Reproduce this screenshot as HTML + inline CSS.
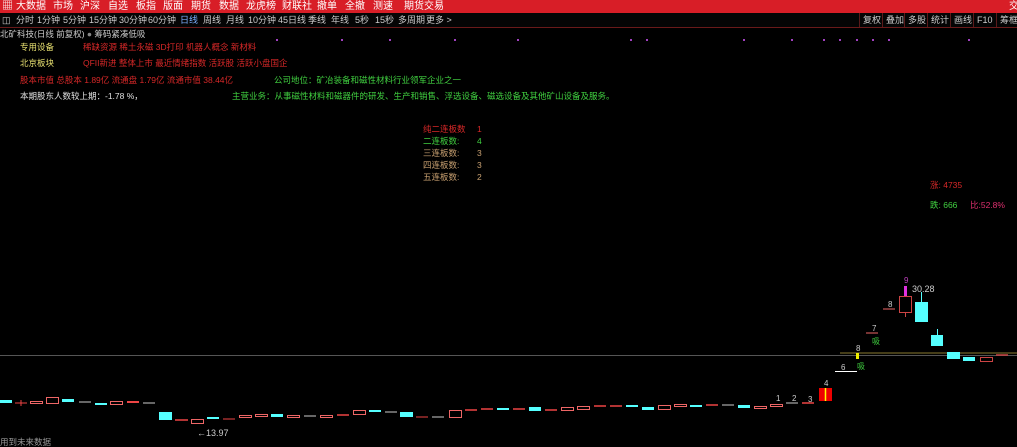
<!DOCTYPE html>
<html><head><meta charset="utf-8"><style>
*{margin:0;padding:0;box-sizing:border-box}
body{width:1017px;height:447px;background:#000;overflow:hidden;position:relative;font-family:"Liberation Sans","Noto Sans CJK SC",sans-serif;font-size:9px;color:#ccc}
.top{position:absolute;left:0;top:0;width:1017px;height:13px;background:#d81e27;color:#fff;font-size:10px;line-height:13px;white-space:nowrap}
.top span{position:absolute;top:0}
.bar{position:absolute;left:0;top:13px;width:1017px;height:15px;background:#050505;border-bottom:1px solid #6a1a1a;font-size:9px;line-height:14px;white-space:nowrap;color:#ccc}
.bar span{position:absolute;top:0}
.r{position:absolute;top:0;height:14px;border-left:1px solid #5a1a1a;padding:0 3px}
.t{position:absolute;white-space:nowrap;font-size:8.5px;line-height:10px}
.dot{position:absolute;width:2px;height:2px;background:#a040c0;top:39px}
</style></head><body>
<div class="top">
<span style="left:2px;font-size:11px">▦</span>
<span style="left:16px">大数据</span><span style="left:53px">市场</span><span style="left:80px">沪深</span><span style="left:108px">自选</span><span style="left:136px">板指</span><span style="left:163px">版面</span><span style="left:191px">期货</span><span style="left:219px">数据</span><span style="left:246px">龙虎榜</span><span style="left:282px">财联社</span><span style="left:317px">撤单</span><span style="left:345px">全撤</span><span style="left:373px">测速</span><span style="left:404px">期货交易</span>
<span style="left:1009px">交</span>
</div>
<div class="bar">
<span style="left:2px">◫</span><span style="left:16px">分时</span><span style="left:37px">1分钟</span><span style="left:63px">5分钟</span><span style="left:89px">15分钟</span><span style="left:119px">30分钟</span><span style="left:148px">60分钟</span><span style="left:180px;color:#7ab0ff">日线</span><span style="left:203px">周线</span><span style="left:226px">月线</span><span style="left:248px">10分钟</span><span style="left:278px">45日线</span><span style="left:308px">季线</span><span style="left:331px">年线</span><span style="left:355px">5秒</span><span style="left:375px">15秒</span><span style="left:398px">多周期</span><span style="left:426px">更多 &gt;</span>
<span class="r" style="left:859px">复权</span><span class="r" style="left:882px">叠加</span><span class="r" style="left:904px">多股</span><span class="r" style="left:927px">统计</span><span class="r" style="left:950px">画线</span><span class="r" style="left:973px">F10</span><span class="r" style="left:996px">筹框</span>
</div>
<div class="t" style="left:0;top:29px;color:#ccc">北矿科技(日线 前复权) <span style="color:#888">●</span> 筹码紧凑低吸</div>
<div class="dot" style="left:276px"></div><div class="dot" style="left:341px"></div><div class="dot" style="left:389px"></div><div class="dot" style="left:454px"></div><div class="dot" style="left:517px"></div><div class="dot" style="left:630px"></div><div class="dot" style="left:646px"></div><div class="dot" style="left:743px"></div><div class="dot" style="left:791px"></div><div class="dot" style="left:823px"></div><div class="dot" style="left:839px"></div><div class="dot" style="left:856px"></div><div class="dot" style="left:872px"></div><div class="dot" style="left:888px"></div><div class="dot" style="left:968px"></div>
<div class="t" style="left:20px;top:42px;color:#e8e070">专用设备</div>
<div class="t" style="left:83px;top:42px;color:#d82828">稀缺资源 稀土永磁 3D打印 机器人概念 新材料</div>
<div class="t" style="left:20px;top:58px;color:#e8e070">北京板块</div>
<div class="t" style="left:83px;top:58px;color:#d82828">QFII新进 整体上市 最近情绪指数 活跃股 活跃小盘国企</div>
<div class="t" style="left:20px;top:75px;color:#d82828">股本市值 总股本 1.89亿 流通盘 1.79亿 流通市值 38.44亿</div>
<div class="t" style="left:274px;top:75px;color:#40d040">公司地位：矿冶装备和磁性材料行业领军企业之一</div>
<div class="t" style="left:20px;top:91px;color:#e0e0e0">本期股东人数较上期：-1.78 %，</div>
<div class="t" style="left:232px;top:91px;color:#40d040">主营业务：从事磁性材料和磁器件的研发、生产和销售、浮选设备、磁选设备及其他矿山设备及服务。</div>
<div class="t" style="left:423px;top:124px;color:#d82828">纯二连板数</div><div class="t" style="left:477px;top:124px;color:#d82828">1</div>
<div class="t" style="left:423px;top:136px;color:#40d040">二连板数:</div><div class="t" style="left:477px;top:136px;color:#40d040">4</div>
<div class="t" style="left:423px;top:148px;color:#c8a070">三连板数:</div><div class="t" style="left:477px;top:148px;color:#c8a070">3</div>
<div class="t" style="left:423px;top:160px;color:#c8a070">四连板数:</div><div class="t" style="left:477px;top:160px;color:#c8a070">3</div>
<div class="t" style="left:423px;top:172px;color:#c8a070">五连板数:</div><div class="t" style="left:477px;top:172px;color:#c8a070">2</div>
<div class="t" style="left:930px;top:180px;color:#d82828">涨: 4735</div>
<div class="t" style="left:930px;top:200px;color:#40d040">跌: 666</div>
<div class="t" style="left:970px;top:200px;color:#e03070">比:52.8%</div>
<div class="t" style="left:0;top:437px;color:#999">用到未来数据</div>
<svg width="1017" height="447" style="position:absolute;left:0;top:0" font-family="Liberation Sans" font-size="8">
<line x1="0" y1="355.5" x2="1017" y2="355.5" stroke="#555"/>
<line x1="840" y1="353" x2="1017" y2="353" stroke="#8a7a30"/>
<line x1="835" y1="371.5" x2="857" y2="371.5" stroke="#fff"/>
<g id="c">
<rect x="0" y="400" width="12" height="3" fill="#5ff"/>
<line x1="15" y1="403" x2="27" y2="403" stroke="#e44"/><line x1="21" y1="400" x2="21" y2="406" stroke="#e44"/>
<rect x="30.5" y="401.5" width="12" height="2" fill="none" stroke="#e66"/>
<rect x="46.5" y="397.5" width="12" height="6" fill="none" stroke="#e66"/>
<rect x="62" y="399" width="12" height="3" fill="#5ff"/>
<line x1="79" y1="402" x2="91" y2="402" stroke="#ccc"/>
<rect x="95" y="403" width="12" height="2" fill="#5ff"/>
<rect x="110.5" y="401.5" width="12" height="3" fill="none" stroke="#e66"/>
<rect x="127" y="401" width="12" height="2" fill="#e44"/>
<line x1="143" y1="403" x2="155" y2="403" stroke="#ccc"/>
<rect x="159" y="412" width="13" height="8" fill="#5ff"/>
<line x1="175" y1="420" x2="188" y2="420" stroke="#e44" stroke-width="1.5"/>
<rect x="191.5" y="419.5" width="12" height="4" fill="none" stroke="#e66"/>
<rect x="207" y="417" width="12" height="2" fill="#5ff"/>
<line x1="223" y1="419" x2="235" y2="419" stroke="#e44"/>
<rect x="239.5" y="415.5" width="12" height="2" fill="none" stroke="#e66"/>
<rect x="255.5" y="414.5" width="12" height="2" fill="none" stroke="#e66"/>
<rect x="271" y="414" width="12" height="3" fill="#5ff"/>
<rect x="287.5" y="415.5" width="12" height="2" fill="none" stroke="#e66"/>
<line x1="304" y1="416" x2="316" y2="416" stroke="#ccc"/>
<rect x="320.5" y="415.5" width="12" height="2" fill="none" stroke="#e66"/>
<line x1="337" y1="415" x2="349" y2="415" stroke="#e44" stroke-width="1.5"/>
<rect x="353.5" y="410.5" width="12" height="4" fill="none" stroke="#e66"/>
<rect x="369" y="410" width="12" height="2" fill="#5ff"/>
<line x1="385" y1="412" x2="397" y2="412" stroke="#ccc"/>
<rect x="400" y="412" width="13" height="5" fill="#5ff"/>
<line x1="416" y1="417" x2="428" y2="417" stroke="#e44"/>
<line x1="432" y1="417" x2="444" y2="417" stroke="#ccc"/>
<rect x="449.5" y="410.5" width="12" height="7" fill="none" stroke="#e66"/>
<line x1="465" y1="410" x2="477" y2="410" stroke="#e44" stroke-width="1.5"/>
<line x1="481" y1="409" x2="493" y2="409" stroke="#e44" stroke-width="1.5"/>
<rect x="497" y="408" width="12" height="2" fill="#5ff"/>
<line x1="513" y1="409" x2="525" y2="409" stroke="#e44" stroke-width="1.5"/>
<rect x="529" y="407" width="12" height="4" fill="#5ff"/>
<line x1="545" y1="410" x2="557" y2="410" stroke="#e44" stroke-width="1.5"/>
<rect x="561.5" y="407.5" width="12" height="3" fill="none" stroke="#e66"/>
<rect x="577.5" y="406.5" width="12" height="3" fill="none" stroke="#e66"/>
<line x1="594" y1="406" x2="606" y2="406" stroke="#e44" stroke-width="1.5"/>
<line x1="610" y1="406" x2="622" y2="406" stroke="#e44" stroke-width="1.5"/>
<rect x="626" y="405" width="12" height="2" fill="#5ff"/>
<rect x="642" y="407" width="12" height="3" fill="#5ff"/>
<rect x="658.5" y="405.5" width="12" height="4" fill="none" stroke="#e66"/>
<rect x="674.5" y="404.5" width="12" height="2" fill="none" stroke="#e66"/>
<rect x="690" y="405" width="12" height="2" fill="#5ff"/>
<line x1="706" y1="405" x2="718" y2="405" stroke="#e44" stroke-width="1.5"/>
<line x1="722" y1="405" x2="734" y2="405" stroke="#ccc"/>
<rect x="738" y="405" width="12" height="3" fill="#5ff"/>
<rect x="754.5" y="406.5" width="12" height="2" fill="none" stroke="#e66"/>
<rect x="770.5" y="404.5" width="12" height="2" fill="none" stroke="#e66"/>
<line x1="786" y1="403" x2="798" y2="403" stroke="#ccc"/>
<line x1="802" y1="403" x2="814" y2="403" stroke="#e44" stroke-width="1.5"/>
<rect x="819" y="388" width="13" height="13" fill="#e00"/><line x1="825.5" y1="388" x2="825.5" y2="401" stroke="#ff0" stroke-width="1.5"/>
<rect x="856" y="353" width="3" height="6" fill="#ee0"/>
<line x1="866" y1="333" x2="878" y2="333" stroke="#e66"/>
<line x1="883" y1="309" x2="895" y2="309" stroke="#e66"/>
<rect x="899.5" y="296.5" width="12" height="16" fill="none" stroke="#c44"/><line x1="905.5" y1="313" x2="905.5" y2="317" stroke="#c44"/>
<rect x="904" y="286" width="3" height="10" fill="#e030e0"/>
<rect x="915" y="302" width="13" height="20" fill="#5ff"/><line x1="921.5" y1="292" x2="921.5" y2="302" stroke="#5ff"/>
<rect x="931" y="335" width="12" height="11" fill="#5ff"/><line x1="937.5" y1="329" x2="937.5" y2="335" stroke="#5ff"/>
<rect x="947" y="352" width="13" height="7" fill="#5ff"/>
<rect x="963" y="357" width="12" height="4" fill="#5ff"/>
<rect x="980.5" y="357.5" width="12" height="4" fill="none" stroke="#c44"/>
<line x1="996" y1="355" x2="1008" y2="355" stroke="#c44" stroke-width="1.5"/>
</g>
<g fill="#ccc">
<text x="776" y="401">1</text><text x="792" y="401">2</text><text x="808" y="402">3</text><text x="824" y="386">4</text>
<text x="841" y="370">6</text><text x="856" y="351">8</text><text x="872" y="331">7</text><text x="888" y="307">8</text>
<text x="912" y="292" font-size="9">30.28</text><text x="197" y="436" font-size="9">←13.97</text>
</g>
<text x="904" y="283" fill="#c040c0">9</text>
<text x="872" y="344" fill="#40d040" font-family="Noto Sans CJK SC">吸</text>
<text x="857" y="369" fill="#40d040" font-family="Noto Sans CJK SC">吸</text>
</svg>
</body></html>
